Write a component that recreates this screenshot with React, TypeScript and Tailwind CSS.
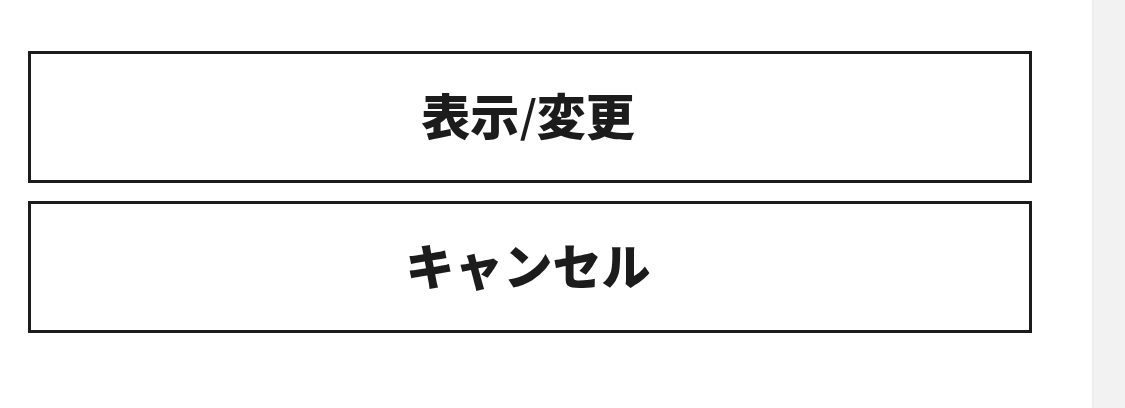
import React from "react";

interface IActionButton {
  children: React.ReactNode;
}

const ActionButton: React.FC<IActionButton> = (props) => {
  return (
    <button
      type="button"
      className="w-full border-3 border-[#1c1c1c] bg-white pt-[29px] pr-1 pb-[35px] text-[49px] leading-[62px] font-black text-[#1c1c1c]"
    >
      {props.children}
    </button>
  );
};

const App: React.FC = () => {
  return (
    <div
      lang="ja"
      className="flex min-h-screen bg-[#f2f2f2] font-['Noto_Sans_CJK_JP',sans-serif]"
    >
      {/* panel */}
      <main className="flex flex-1 flex-col gap-[18px] bg-white pt-[51px] pr-[60px] pb-12 pl-7">
        <ActionButton>
          表示
          <span className="font-['Inter',sans-serif] leading-none font-normal">
            /
          </span>
          変更
        </ActionButton>
        <ActionButton>キャンセル</ActionButton>
      </main>
      {/* gutter */}
      <div className="w-[33px] border-l-2 border-[#ececec]" />
    </div>
  );
};

export default App;
